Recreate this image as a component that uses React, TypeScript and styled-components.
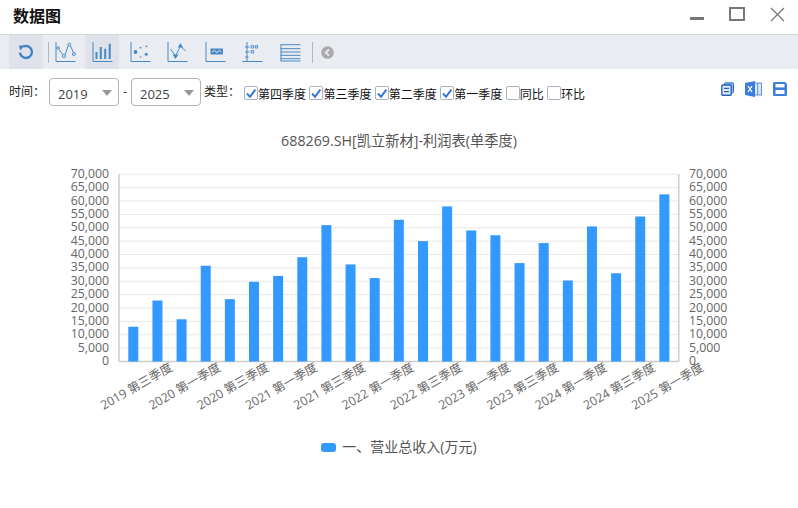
import React from "react";
import styled, { createGlobalStyle } from "styled-components";

const GlobalStyle = createGlobalStyle`
  html, body { margin: 0; padding: 0; background: #fff; }
  body { font-family: "Open Sans", "Noto Sans CJK SC", sans-serif; overflow: hidden; }
`;

const values = [
  13000, 22800, 15800, 35800, 23300, 29800, 32000, 39000, 51000, 36300, 31200, 53000,
  45000, 58000, 49000, 47200, 36800, 44300, 30300, 50500, 33000, 54200, 62500,
];
const labels = [
  "2019 第三季度", "2020 第一季度", "2020 第三季度", "2021 第一季度", "2021 第三季度", "2022 第一季度",
  "2022 第三季度", "2023 第一季度", "2023 第三季度", "2024 第一季度", "2024 第三季度", "2025 第一季度",
];
const ticks = Array.from({ length: 15 }, (_, i) => i * 5000);

// plot area, relative to the top of the svg
const TOP = 59.3;
const BOTTOM = 246.5;
const LEFT = 119;
const RIGHT = 678.7;
const LABEL_Y = 271;
const yOf = (v: number) => BOTTOM - (v / 70000) * (BOTTOM - TOP);
const xOf = (i: number) => 133.3 + i * 24.14;

const Check = ({ label, checked = false }: { label: string; checked?: boolean }) => (
  <CheckItem>
    <CheckBox>
      {checked && (
        <svg width="12" height="11" viewBox="0 0 12 11">
          <path d="M2 5.5 L5 8.8 L10.4 1.6" fill="none" stroke="#2f74d0" strokeWidth="1.9" />
        </svg>
      )}
    </CheckBox>
    {label}
  </CheckItem>
);

const YearSelect = ({ value }: { value: string }) => (
  <SelectBox>
    <select defaultValue={value}>
      <option>{value}</option>
    </select>
  </SelectBox>
);

const Chart = () => (
  <ChartSvg width="798" height="323" viewBox="0 0 798 323" role="img">
    {ticks.map((t) => (
      <GridLine key={t} x1={LEFT} x2={RIGHT} y1={yOf(t)} y2={yOf(t)} />
    ))}
    <AxisLine x1={LEFT} x2={LEFT} y1={TOP} y2={BOTTOM} />
    <AxisLine x1={RIGHT} x2={RIGHT} y1={TOP} y2={BOTTOM} />
    <AxisLine x1={LEFT} x2={RIGHT} y1={BOTTOM} y2={BOTTOM} />
    {values.map((v, i) => (
      <Bar key={i} x={xOf(i) - 5} y={yOf(v)} width={10} height={BOTTOM - yOf(v)} />
    ))}
    {ticks.map((t) => (
      <React.Fragment key={t}>
        <AxisText x={109} y={yOf(t) - 1} textAnchor="end">{t.toLocaleString("en-US")}</AxisText>
        <AxisText x={689} y={yOf(t) - 1}>{t.toLocaleString("en-US")}</AxisText>
      </React.Fragment>
    ))}
    {labels.map((l, i) => {
      const x = xOf(i * 2) + 3;
      return (
        <AxisText key={l} x={x} y={LABEL_Y} textAnchor="middle" transform={`rotate(-30 ${x} ${LABEL_Y})`}>
          {l}
        </AxisText>
      );
    })}
  </ChartSvg>
);

const App = () => (
  <Page>
    <GlobalStyle />
    <TitleBar>
      <Title>数据图</Title>
      <WindowControls>
        <svg width="14" height="14" viewBox="0 0 14 14">
          <rect x="0" y="10" width="14" height="3" fill="#777" />
        </svg>
        <svg width="16" height="14" viewBox="0 0 16 14">
          <rect x="1" y="1" width="14" height="12" fill="none" stroke="#777" strokeWidth="2" />
        </svg>
        <svg width="15" height="15" viewBox="0 0 15 15">
          <path d="M1 1 L14 14 M14 1 L1 14" stroke="#777" strokeWidth="1.3" fill="none" />
        </svg>
      </WindowControls>
    </TitleBar>

    <Toolbar>
      <ToolButton $active>
        <svg width="18" height="18" viewBox="0 0 18 18">
          <path d="M6.2 3.6 A6 6 0 1 1 3 9.6" fill="none" stroke="#3f82c4" strokeWidth="2.4" />
          <path d="M2 2.6 L7.6 2.4 L3.2 7.4 Z" fill="#3f82c4" />
        </svg>
      </ToolButton>
      <Divider />
      <ToolButton>
        <ToolIcon viewBox="0 0 20 20">
          <path d="M0.5 0 V19.5 H20" />
          <path d="M3.4 7.4 L7 12.4 M9.6 12.6 L12.6 4 M15 4 L18 10.6" />
          <circle cx="2.6" cy="6" r="1.2" />
          <circle cx="8.4" cy="14" r="1.6" />
          <circle cx="13.8" cy="2.6" r="1.4" />
          <circle cx="18.4" cy="12" r="1.5" />
        </ToolIcon>
      </ToolButton>
      <ToolButton $active>
        <ToolIcon viewBox="0 0 20 20">
          <path d="M0.5 0 V19.5 H20" />
          <path d="M4 17 V10 M8.3 17 V5 M12.7 17 V6.7 M17.2 17 V1.7" strokeWidth="2" />
        </ToolIcon>
      </ToolButton>
      <ToolButton>
        <ToolIcon viewBox="0 0 20 20">
          <path d="M0.5 0 V19.5 H20" />
          <Dots>
            <circle cx="5" cy="10" r="1.9" />
            <circle cx="10" cy="5.7" r="0.9" />
            <circle cx="16" cy="4.3" r="0.9" />
            <circle cx="15.7" cy="12.3" r="1.5" />
            <circle cx="10" cy="15" r="0.8" />
          </Dots>
        </ToolIcon>
      </ToolButton>
      <ToolButton>
        <ToolIcon viewBox="0 0 20 20">
          <path d="M0.5 0 V19.5 H20" />
          <path d="M3 7 L8 14 L13 4 L18 9" />
          <Dots>
            <path d="M5 12.5 L11 12.5 L8 17 Z" />
            <path d="M10.2 5.4 L15.6 5.4 L13 1 Z" />
          </Dots>
        </ToolIcon>
      </ToolButton>
      <ToolButton>
        <ToolIcon viewBox="0 0 20 20">
          <path d="M0.5 0 V19.5 H20" />
          <Dots>
            <rect x="5" y="6.5" width="12.5" height="6" />
          </Dots>
          <path d="M6.5 10 L9 8.4 L11.5 10.6 L14 8.4 L16 10" stroke="#e9ecf1" strokeWidth="1" />
        </ToolIcon>
      </ToolButton>
      <ToolButton>
        <ToolIcon viewBox="0 0 20 20">
          <path d="M4.5 0 V19.5 M0 19.5 H20" />
          <path d="M2.5 5 H7 M2.5 10 H7 M2.5 15 H6" />
          <path d="M8.7 3.6 h2.4 v2.4 h-2.4 Z M12.7 3.6 h2.4 v2.4 h-2.4 Z M8.7 8.6 h2.4 v2.4 h-2.4 Z" strokeWidth="0.9" />
        </ToolIcon>
      </ToolButton>
      <ToolButton>
        <ToolIcon viewBox="0 0 20 20">
          <path d="M0.5 2.7 V19 M0 2.7 H20 M0 6.7 H20 M0 10 H20 M0 13.3 H20 M0 16.7 H20 M0 19 H20" />
        </ToolIcon>
      </ToolButton>
      <Divider />
      <BackButton>
        <svg width="13" height="13" viewBox="0 0 14 14">
          <circle cx="7" cy="7" r="6.8" fill="#aaa" />
          <path d="M8.6 3.6 L5.2 7 L8.6 10.4" fill="none" stroke="#e9ecf1" strokeWidth="2" />
        </svg>
      </BackButton>
    </Toolbar>

    <FilterRow>
      <FieldLabel>时间：</FieldLabel>
      <YearSelect value="2019" />
      <Dash>-</Dash>
      <YearSelect value="2025" />
      <TypeLabel>类型：</TypeLabel>
      <CheckGroup>
        <Check label="第四季度" checked />
        <Check label="第三季度" checked />
        <Check label="第二季度" checked />
        <Check label="第一季度" checked />
        <Check label="同比" />
        <Check label="环比" />
      </CheckGroup>
      <Actions>
        <svg width="13" height="14" viewBox="0 0 13 14">
          <rect x="3.5" y="0.8" width="9" height="10" rx="1" fill="#8db4ea" stroke="#2f6fcb" />
          <rect x="0.8" y="3" width="9.4" height="10.2" rx="1" fill="#dfeafb" stroke="#2560bd" strokeWidth="1.4" />
          <path d="M3 6.4 H8 M3 9.6 H8" stroke="#2560bd" strokeWidth="1.4" />
        </svg>
        <svg width="17" height="16" viewBox="0 0 17 16">
          <rect x="9" y="2" width="7.5" height="12" fill="#dbe7f8" stroke="#5d93de" />
          <path d="M12.7 2 V14" stroke="#5d93de" />
          <path d="M0 2 L10 0 V16 L0 14 Z" fill="#3a7ddc" />
          <path d="M3 5 L7 11 M7 5 L3 11" stroke="#fff" strokeWidth="1.3" />
        </svg>
        <svg width="14" height="14" viewBox="0 0 14 14">
          <path d="M1.5 0 H12 L14 2 V12.5 A1.5 1.5 0 0 1 12.5 14 H1.5 A1.5 1.5 0 0 1 0 12.5 V1.5 A1.5 1.5 0 0 1 1.5 0 Z" fill="#3a7ddc" />
          <rect x="2.5" y="2" width="9" height="3.4" fill="#fff" />
          <rect x="2.5" y="8" width="9" height="4" fill="#fff" />
        </svg>
      </Actions>
    </FilterRow>

    <ChartArea>
      <ChartTitle>688269.SH[凯立新材]-利润表(单季度)</ChartTitle>
      <Chart />
    </ChartArea>
    <Legend>
      <LegendSwatch />
      一、营业总收入(万元)
    </Legend>
  </Page>
);

export default App;

const Page = styled.div`
  width: 798px;
  height: 508px;
  background: #fff;
  overflow: hidden;
`;

const TitleBar = styled.header`
  height: 34px;
  display: flex;
  align-items: flex-start;
  justify-content: space-between;
  padding-left: 13px;
`;

const Title = styled.h1`
  margin: 5px 0 0;
  font: 700 16px/20px "Noto Sans CJK SC", sans-serif;
  color: #111;
`;

const WindowControls = styled.div`
  display: flex;
  align-items: flex-start;
  gap: 25px;
  padding: 7px 13px 0 0;
`;

const Toolbar = styled.nav`
  height: 34px;
  display: flex;
  align-items: stretch;
  gap: 3.5px;
  padding-left: 9px;
  background: #e9ecf1;
  border-top: 1px solid #d6d6d6;
`;

const ToolButton = styled.button<{ $active?: boolean }>`
  width: 34px;
  padding: 0;
  border: 0;
  display: flex;
  align-items: center;
  justify-content: center;
  background: ${(p) => (p.$active ? "#dfe2eb" : "transparent")};
`;

const ToolIcon = styled.svg`
  width: 20px;
  height: 20px;
  overflow: visible;
  fill: none;
  stroke: #4a88c4;
  stroke-width: 1;
  transform: translateX(0.5px);
`;

const Dots = styled.g`
  fill: #4a88c4;
  stroke: none;
`;

const Divider = styled.span`
  width: 1px;
  height: 21px;
  align-self: center;
  margin: 0 -5px 0 1.5px;
  background: #b4b8bd;
`;

const BackButton = styled.span`
  display: flex;
  align-items: center;
  margin-left: 9.5px;
`;

const FilterRow = styled.div`
  height: 46px;
  display: flex;
  align-items: center;
  padding: 0 11px 0 9px;
  font: 12px "Noto Sans CJK SC", sans-serif;
  color: #222;
`;

const FieldLabel = styled.span`
  width: 40px;
  margin-top: -3px;
`;

const SelectBox = styled.div`
  position: relative;
  width: 70px;
  height: 28px;

  select {
    width: 100%;
    height: 100%;
    padding: 4px 0 0 8px;
    appearance: none;
    background: #fff;
    border: 1px solid #b5b5b5;
    border-radius: 4px;
    font: 13px "Open Sans", sans-serif;
    color: #444;
  }

  &::after {
    content: "";
    position: absolute;
    right: 7px;
    top: 12px;
    border-left: 5px solid transparent;
    border-right: 5px solid transparent;
    border-top: 6px solid #999;
  }
`;

const Dash = styled.span`
  width: 12px;
  text-align: center;
  margin-top: -3px;
`;

const TypeLabel = styled.span`
  width: 40px;
  margin: -3px 0 0 3px;
`;

const CheckGroup = styled.div`
  display: flex;
  gap: 3.4px;
  margin-top: 2px;
`;

const CheckItem = styled.label`
  display: flex;
  align-items: center;
  height: 16px;
  color: #111;
`;

const CheckBox = styled.span`
  width: 12px;
  height: 12px;
  display: flex;
  align-items: center;
  justify-content: center;
  border: 1px solid #a9b4c2;
  border-radius: 2px;
  background: #fff;
`;

const Actions = styled.div`
  display: flex;
  align-items: center;
  gap: 11px;
  margin-left: auto;
  margin-top: -6px;
`;

const ChartArea = styled.section`
  position: relative;
`;

const ChartTitle = styled.h2`
  position: absolute;
  top: 14px;
  left: 0;
  right: 0;
  margin: 0;
  text-align: center;
  font: 400 14.25px/24px "Open Sans", "Noto Sans CJK SC", sans-serif;
  color: #555;
`;

const ChartSvg = styled.svg`
  display: block;
`;

const GridLine = styled.line`
  stroke: #e8e8e8;
  stroke-width: 1;
`;

const AxisLine = styled.line`
  stroke: #ccc;
  stroke-width: 1.5;
`;

const Bar = styled.rect`
  fill: #3399ff;
`;

const AxisText = styled.text`
  font: 12.3px "Open Sans", "Noto Sans CJK SC", sans-serif;
  fill: #666;
  dominant-baseline: central;
`;

const Legend = styled.div`
  display: flex;
  align-items: center;
  justify-content: center;
  gap: 6px;
  margin-top: -1px;
  font: 14px/20px "Open Sans", "Noto Sans CJK SC", sans-serif;
  color: #555;
`;

const LegendSwatch = styled.span`
  width: 15px;
  height: 9px;
  border-radius: 3px;
  background: #3399ff;
`;
